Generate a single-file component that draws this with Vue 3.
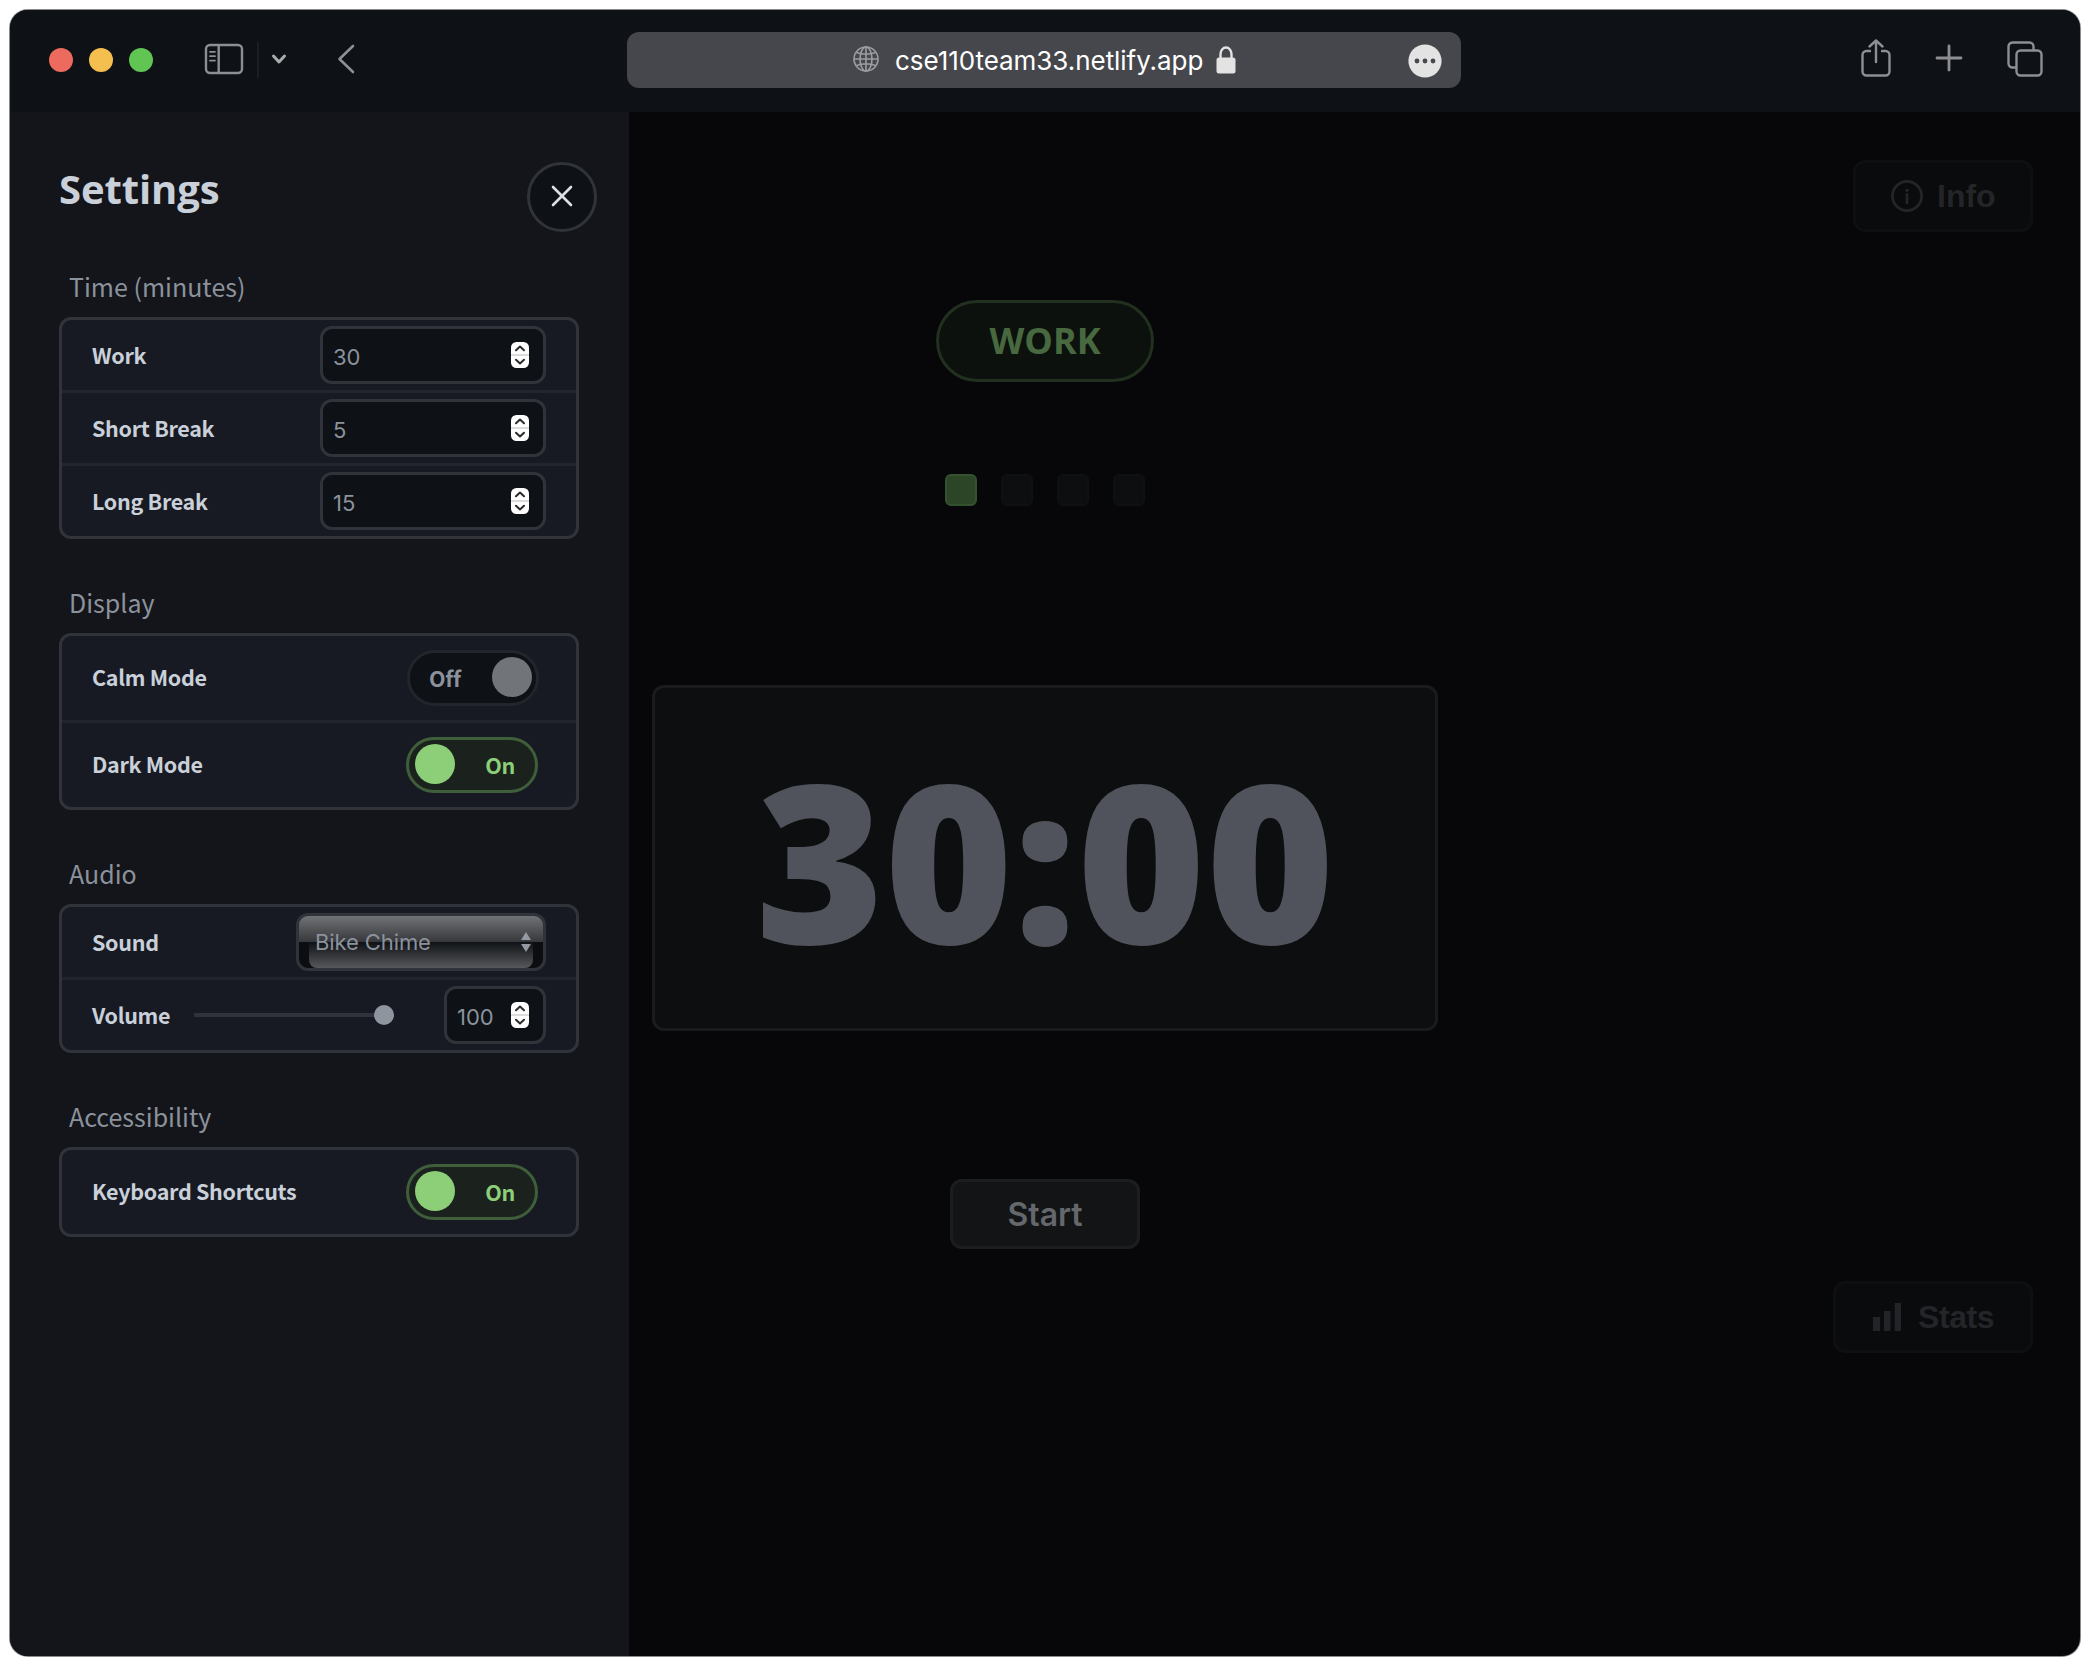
<script setup>
const timeRows = [
  { label: 'Work', value: '30' },
  { label: 'Short Break', value: '5' },
  { label: 'Long Break', value: '15' },
]
const displayRows = [
  { label: 'Calm Mode', on: false },
  { label: 'Dark Mode', on: true },
]
const accessRows = [{ label: 'Keyboard Shortcuts', on: true }]
</script>

<template>
  <div class="window">
    <header class="toolbar">
      <div class="lights"><i class="red"></i><i class="yellow"></i><i class="green"></i></div>
      <svg class="ic-side" width="40" height="32" viewBox="0 0 40 32" fill="none" stroke="#8e8f92" stroke-width="2.4"><rect x="2" y="2" width="36" height="28" rx="4" /><path d="M14.7 2v28" /><path d="M6 8.8h5M6 13.2h5M6 17.6h5" stroke-width="1.8" stroke-linecap="round" /></svg>
      <span class="sep"></span>
      <svg class="ic-chev" width="18" height="14" viewBox="0 0 18 14" fill="none" stroke="#a9aaac" stroke-width="3" stroke-linecap="round" stroke-linejoin="round"><path d="M3.5 4l5.500 6 5.500-6" /></svg>
      <svg class="ic-back" width="20" height="32" viewBox="0 0 20 32" fill="none" stroke="#8e8f92" stroke-width="2.6" stroke-linecap="round" stroke-linejoin="round"><path d="M17 3L3.500 16 17 29" /></svg>
      <div class="url">
        <svg class="globe" width="26" height="26" viewBox="0 0 26 26" fill="none" stroke="#9c9da1" stroke-width="1.6"><circle cx="13" cy="13" r="12" /><ellipse cx="13" cy="13" rx="6" ry="12" /><path d="M13 1v24M1 13h24M3.500 6.500Q13 10 22.500 6.500M3.500 19.500Q13 16 22.500 19.500" /></svg>
        <span class="host">cse110team33.netlify.app</span>
        <svg class="lock" width="20" height="28" viewBox="0 0 20 28"><path d="M4.500 13V8a5.500 6.500 0 0 1 11 0v5" fill="none" stroke="#e3e3e4" stroke-width="2.400" /><rect x=".5" y="11.500" width="19" height="16" rx="2.500" fill="#e3e3e4" /></svg>
        <svg class="more" width="34" height="34" viewBox="0 0 34 34"><circle cx="17" cy="17" r="16.600" fill="#e3e3e4" /><g fill="#46474c"><circle cx="9" cy="17" r="2.400" /><circle cx="17" cy="17" r="2.400" /><circle cx="25" cy="17" r="2.400" /></g></svg>
      </div>
      <svg class="ic-share" width="30" height="38" viewBox="0 0 30 38" fill="none" stroke="#8e8f92" stroke-width="2.400" stroke-linecap="round" stroke-linejoin="round"><path d="M10 12H5.500a4 4 0 0 0-4 4v16.500a4 4 0 0 0 4 4h19a4 4 0 0 0 4-4V16a4 4 0 0 0-4-4H20" stroke-linecap="butt" /><path d="M15 23V2M8.500 7.500L15 1.500l6.500 6" /></svg>
      <svg class="ic-plus" width="28" height="28" viewBox="0 0 28 28" fill="none" stroke="#8e8f92" stroke-width="2.800" stroke-linecap="round"><path d="M14 2v24M2 14h24" /></svg>
      <svg class="ic-tabs" width="36" height="36" viewBox="0 0 36 36" fill="none" stroke="#8e8f92" stroke-width="2.400"><rect x="9.500" y="9.500" width="25" height="25" rx="4" /><path d="M9 26.500H5.500a4 4 0 0 1-4-4V5.500a4 4 0 0 1 4-4h17a4 4 0 0 1 4 4V9" /></svg>
    </header>

    <div class="page">
      <aside class="sidebar">
        <div class="head">
          <h1>Settings</h1>
          <button class="close"><svg width="22" height="22" viewBox="0 0 22 22" stroke="#dcdfe4" stroke-width="2.600" stroke-linecap="round"><path d="M2 2l18 18M20 2L2 20" /></svg></button>
        </div>

        <section>
          <h2>Time (minutes)</h2>
          <div class="box">
            <div v-for="r in timeRows" :key="r.label" class="row">
              <span class="name">{{ r.label }}</span>
              <div class="field wide"><span>{{ r.value }}</span>
                <svg class="spin" width="18" height="26" viewBox="0 0 18 26"><rect width="18" height="26" rx="5.500" fill="#fff" /><path d="M0 13h18" stroke="#dcdcdc" stroke-width="2" /><path d="M5 8.300l4-3.800 4 3.800M5 17.700l4 3.800 4-3.800" fill="none" stroke="#2b2b2b" stroke-width="2" stroke-linecap="round" stroke-linejoin="round" /></svg>
              </div>
            </div>
          </div>
        </section>

        <section>
          <h2>Display</h2>
          <div class="box">
            <div v-for="r in displayRows" :key="r.label" class="row tall">
              <span class="name">{{ r.label }}</span>
              <div class="toggle" :class="{ on: r.on }"><i></i><b>{{ r.on ? 'On' : 'Off' }}</b></div>
            </div>
          </div>
        </section>

        <section>
          <h2>Audio</h2>
          <div class="box">
            <div class="row">
              <span class="name">Sound</span>
              <div class="select">
                <div class="gloss"></div>
                <span>Bike Chime</span>
                <svg width="10" height="20" viewBox="0 0 10 20" fill="#9299a3"><path d="M5 0l5 8H0zM5 20l5-8H0z" /></svg>
              </div>
            </div>
            <div class="row">
              <span class="name">Volume</span>
              <div class="slider"><i></i></div>
              <div class="field"><span>100</span>
                <svg class="spin" width="18" height="26" viewBox="0 0 18 26"><rect width="18" height="26" rx="5.500" fill="#fff" /><path d="M0 13h18" stroke="#dcdcdc" stroke-width="2" /><path d="M5 8.300l4-3.800 4 3.800M5 17.700l4 3.800 4-3.800" fill="none" stroke="#2b2b2b" stroke-width="2" stroke-linecap="round" stroke-linejoin="round" /></svg>
              </div>
            </div>
          </div>
        </section>

        <section>
          <h2>Accessibility</h2>
          <div class="box">
            <div v-for="r in accessRows" :key="r.label" class="row tall">
              <span class="name">{{ r.label }}</span>
              <div class="toggle" :class="{ on: r.on }"><i></i><b>{{ r.on ? 'On' : 'Off' }}</b></div>
            </div>
          </div>
        </section>
      </aside>

      <main class="timer">
        <div class="mode">WORK</div>
        <div class="dots"><i class="done"></i><i></i><i></i><i></i></div>
        <div class="clock">30:00</div>
        <button class="start">Start</button>
      </main>

      <nav class="side">
        <button class="ghost info">
          <svg width="32" height="32" viewBox="0 0 32 32" fill="none" stroke="#242528"><circle cx="16" cy="16" r="14.600" stroke-width="2.800" /><path d="M16 14.500v8.500" stroke-width="2.800" stroke-linecap="round" /><circle cx="16" cy="10.300" r="1.600" fill="#242528" stroke="none" /></svg>
          <span>Info</span>
        </button>
        <button class="ghost stats">
          <svg width="28" height="28" viewBox="0 0 28 28" fill="#232427"><path d="M0 14h7v14H0zM11 8h6.500v20H11zM21.700 0h6.300v28h-6.300z" /></svg>
          <span>Stats</span>
        </button>
      </nav>
    </div>
  </div>
</template>

<style>
body { background: #fff; }
</style>

<style scoped>
* { box-sizing: border-box; }
h1, h2 { margin: 0; font-weight: 400; }
button { padding: 0; margin: 0; background: none; border: 0; }
svg { flex: none; display: block; }
.window { width: 2070px; height: 1646px; margin: 10px 0 9px 10px; border-radius: 18px; overflow: hidden; background: #070709; box-shadow: 0 0 0 1px #8a8b8d; display: flex; flex-direction: column; font-family: Inter, sans-serif; }
.toolbar { height: 102px; flex: none; background: #0e1116; display: flex; align-items: flex-start; padding-left: 39px; }
.lights { display: flex; gap: 16px; margin-top: 38px; }
.lights i { width: 24px; height: 24px; border-radius: 50%; }
.red { background: #ec6a5e; }
.yellow { background: #f4bf4f; }
.green { background: #61c554; }
.ic-side { margin: 33px 0 0 51px; }
.sep { width: 2px; height: 36px; background: #1c1e23; margin: 32px 0 0 13px; }
.ic-chev { margin: 42px 0 0 11px; }
.ic-back { margin: 33px 0 0 48px; }
.url { margin: 22px 0 0 271px; width: 834px; height: 56px; border-radius: 12px; background: #46474c; display: flex; align-items: center; color: #fff; font-size: 26px; }
.globe { margin: -2px 0 0 226px; }
.host { margin-left: 16px; width: 308px; line-height: 56px; margin-top: 2px; white-space: nowrap; display: inline-block; letter-spacing: -0.05px; }
.lock { margin-left: 13px; }
.more { margin: 1px 19px 0 auto; }
.ic-share { margin: 29px 0 0 399.5px; }
.ic-plus { margin: 33.5px 0 0 44px; }
.ic-tabs { margin: 31px 0 0 44.5px; }

.page { flex: 1; display: flex; min-height: 0; }
.sidebar { width: 619px; background: #14151a; padding: 50px 50px 0 49px; flex: none; font-family: "Noto Sans CJK SC", sans-serif; }
.head { display: flex; justify-content: space-between; align-items: flex-start; height: 104px; margin-right: -18px; }
h1 { font: 700 40px/54px "Open Sans", sans-serif; color: #c9d0d9; letter-spacing: -0.1px; }
.close { width: 70px; height: 70px; border: 3px solid #303338; border-radius: 50%; background: #0e1115; display: grid; place-items: center; padding-bottom: 2px; }
section { margin-bottom: 43px; }
h2 { font-size: 25px; line-height: 40px; height: 51px; color: #8b929c; padding-left: 10px; }
.box { border: 3px solid #30343a; border-radius: 12px; background: #171a22; }
.row { height: 73px; border-bottom: 3px solid #22252d; display: flex; align-items: center; padding: 0 30px; }
.row:last-child { height: 70px; border-bottom: 0; }
.row.tall { height: 87px; }
.row.tall:last-child { height: 84px; }
.name { font-size: 21.5px; font-weight: 700; color: #c9d0d9; white-space: nowrap; letter-spacing: -0.3px; padding-bottom: 1px; }
.tall .name { padding-bottom: 3px; }
.field { margin-left: auto; width: 102px; height: 58px; border: 3px solid #30343a; border-radius: 12px; background: #0e1115; display: flex; align-items: center; justify-content: space-between; padding: 0 14px 0 10px; font: 22px Inter, sans-serif; color: #8b929c; }
.field span { padding-top: 3px; }
.wide { width: 226px; }
.spin { margin-top: -1px; }
.toggle { margin-left: auto; margin-right: 7px; width: 132px; height: 56px; border: 3px solid #22252b; border-radius: 28px; background: #0e1115; display: flex; flex-direction: row-reverse; align-items: center; justify-content: space-between; padding: 0 4px 0 19px; }
.toggle i { width: 40px; height: 40px; border-radius: 50%; background: #717478; margin-top: -2px; }
.toggle b { font-size: 21.5px; color: #8b929c; letter-spacing: -0.3px; padding-bottom: 2px; }
.toggle.on { flex-direction: row; margin-right: 8px; border-color: #3f5f3a; background: #1b221e; padding: 0 20px 0 6px; }
.toggle.on i { background: #8dce79; }
.toggle.on b { color: #8dce79; }
.select { position: relative; overflow: hidden; margin-left: auto; width: 250px; height: 58px; border: 3px solid #30343a; border-radius: 12px; display: flex; align-items: center; justify-content: space-between; padding: 0 12px 0 16px; font: 22px Inter, sans-serif; letter-spacing: -0.1px; color: #8b929c; background: linear-gradient(#717275, #37383b) 0 0 / 100% 26px no-repeat, #0b0d10; }
.select span, .select svg { position: relative; }
.gloss { position: absolute; left: 10px; right: 10px; top: 26px; bottom: 0; border-radius: 0 0 8px 8px; background: linear-gradient(#0e1115, #57585b); }
.slider { margin-left: 24px; width: 200px; height: 20px; display: flex; align-items: center; justify-content: flex-end; background: linear-gradient(#30333b, #30333b) 0 50% / 100% 4px no-repeat; }
.slider i { width: 20px; height: 20px; border-radius: 50%; background: #8f959f; }

.timer { width: 832px; display: flex; flex-direction: column; align-items: center; flex: none; }
.mode { margin-top: 188px; width: 218px; height: 82px; border: 3px solid #22301f; border-radius: 41px; background: #0c110d; display: grid; place-items: center; font: 700 36px/50px "Open Sans", sans-serif; color: #486940; }
.dots { display: flex; gap: 24px; margin-top: 92px; }
.dots i { width: 32px; height: 32px; border-radius: 6px; background: #0c0e10; border: 2px solid #0e1012; }
.dots .done { background: #2b4526; border-color: #345230; }
.clock { margin-top: 179px; width: 786px; height: 346px; border: 3px solid #1a1b1d; border-radius: 12px; background: #0c0e0f; display: grid; place-items: center; padding-top: 2px; font: 800 220px/300px "Open Sans", sans-serif; color: #50535b; }
.start { margin-top: 148px; width: 190px; height: 70px; border: 3px solid #1c1d1f; border-radius: 12px; background: #121416; font: 600 32px Inter, sans-serif; color: #64676b; }

.side { flex: 1; display: flex; flex-direction: column; align-items: flex-end; padding: 48px 47px 0 0; }
.ghost { height: 72px; border: 3px solid #0e0f11; border-radius: 12px; background: #0a0b0d; display: flex; align-items: center; color: #242528; font: 700 32px "Liberation Sans", sans-serif; }
.info { width: 180px; padding-left: 35px; gap: 15px; }
.info span { margin-left: -1px; }
.stats { width: 200px; padding-left: 37px; gap: 17px; margin-top: 1049px; letter-spacing: -0.4px; }
</style>
